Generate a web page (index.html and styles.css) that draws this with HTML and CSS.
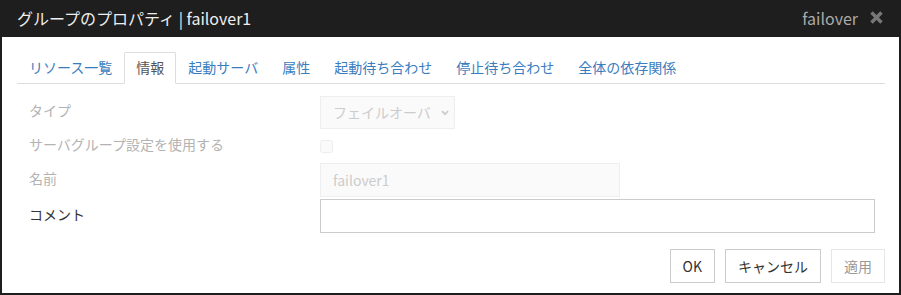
FILE: index.html
```html
<!DOCTYPE html>
<html lang="ja">
<head>
    <meta charset="UTF-8">
    <meta name="viewport" content="width=device-width, initial-scale=1.0">
    <title>グループのプロパティ</title>
    <link rel="stylesheet" href="styles.css">
</head>
<body>

    <div class="dialog">

        <!-- Title bar -->
        <div class="dialog-header">
            <h1 class="dialog-title">グループのプロパティ | failover1</h1>
            <span class="dialog-type">failover</span>
            <button class="dialog-close" aria-label="閉じる">
                <svg width="15" height="15" viewBox="0 0 15 15">
                    <path d="M2.5 2.5 L12.5 12.5 M12.5 2.5 L2.5 12.5" stroke="#777" stroke-width="3.4" stroke-linecap="butt"/>
                </svg>
            </button>
        </div>

        <div class="dialog-body">

            <!-- Tabs -->
            <ul class="tabs">
                <li><a href="#">リソース一覧</a></li>
                <li class="active"><a href="#">情報</a></li>
                <li><a href="#">起動サーバ</a></li>
                <li><a href="#">属性</a></li>
                <li><a href="#">起動待ち合わせ</a></li>
                <li><a href="#">停止待ち合わせ</a></li>
                <li><a href="#">全体の依存関係</a></li>
            </ul>

            <!-- Form -->
            <div class="form">
                <div class="form-row">
                    <label class="form-label disabled">タイプ</label>
                    <div class="select-wrap">
                        <select class="select" disabled>
                            <option>フェイルオーバ</option>
                        </select>
                        <svg class="select-arrow" width="8" height="6" viewBox="0 0 8 6">
                            <path d="M1 1.2 L4 4.2 L7 1.2" fill="none" stroke="#ccc" stroke-width="1.8"/>
                        </svg>
                    </div>
                </div>
                <div class="form-row">
                    <label class="form-label disabled">サーバグループ設定を使用する</label>
                    <input type="checkbox" class="checkbox" disabled>
                </div>
                <div class="form-row">
                    <label class="form-label disabled">名前</label>
                    <input type="text" class="input input-name" value="failover1" disabled>
                </div>
                <div class="form-row row-comment">
                    <label class="form-label">コメント</label>
                    <input type="text" class="input input-comment">
                </div>
            </div>

            <!-- Buttons -->
            <div class="actions">
                <button class="btn">OK</button>
                <button class="btn">キャンセル</button>
                <button class="btn" disabled>適用</button>
            </div>

        </div>
    </div>

</body>
</html>
```

FILE: styles.css
```css
* {
    box-sizing: border-box;
}
body {
    margin: 0;
    padding: 0;
    font-family: "Noto Sans CJK JP", "Noto Sans", sans-serif;
    font-size: 14px;
    color: #333;
    background-color: #1e1e1e;
}
.dialog {
    width: 901px;
    height: 295px;
    border: 2px solid #1e1e1e;
    border-top: 0;
    background-color: #fff;
    display: flex;
    flex-direction: column;
}
.dialog-header {
    height: 37px;
    margin: 0 -2px;
    padding: 0 17px 2px;
    background-color: #1e1e1e;
    display: flex;
    align-items: center;
}
.dialog-title {
    margin: 0;
    flex: 1;
    font-size: 16px;
    font-weight: normal;
    color: #eee;
}
.dialog-type {
    font-size: 16px;
    color: #aaa;
}
.dialog-close {
    margin-left: 11px;
    padding: 0;
    border: 0;
    background: none;
    display: flex;
}
.dialog-body {
    flex: 1;
    padding: 15px 14px 10px 15px;
    display: flex;
    flex-direction: column;
}
.tabs {
    list-style: none;
    margin: 0;
    padding: 0;
    display: flex;
    border-bottom: 1px solid #ddd;
}
.tabs li {
    margin-bottom: -1px;
}
.tabs a {
    display: block;
    padding: 5px 11px 6px;
    line-height: 19px;
    border: 1px solid transparent;
    border-radius: 2px 2px 0 0;
    color: #3a7dbf;
    text-decoration: none;
}
.tabs li.active a {
    color: #555;
    background-color: #fff;
    border-color: #ddd;
    border-bottom-color: #fff;
}
.form {
    margin-top: 11px;
    padding-left: 12px;
}
.form-row {
    height: 34px;
    display: flex;
    align-items: center;
}
.row-comment {
    margin-top: 2px;
}
.form-label {
    width: 291px;
    padding-bottom: 5px;
    color: #333;
}
.form-label.disabled {
    color: #b3b3b3;
}
.select-wrap {
    position: relative;
}
.select {
    appearance: none;
    width: 135px;
    height: 33px;
    margin: 0;
    padding: 0 12px;
    font-family: inherit;
    font-size: 14px;
    color: #ccc;
    background-color: #fafafa;
    border: 1px solid #eee;
    border-radius: 0;
    opacity: 1;
}
.select-arrow {
    position: absolute;
    right: 6px;
    top: 14px;
}
.checkbox {
    appearance: none;
    width: 13px;
    height: 13px;
    margin: 0;
    border: 1px solid #eee;
    border-radius: 3px;
    background-color: #fafafa;
}
.input {
    height: 34px;
    margin: 0;
    padding: 0 12px;
    font-family: inherit;
    font-size: 14px;
    border: 1px solid #ccc;
    background-color: #fff;
    color: #333;
}
.input-name {
    width: 300px;
    color: #ccc;
    background-color: #fafafa;
    border-color: #eee;
}
.input-comment {
    width: 555px;
}
.actions {
    margin-top: auto;
    display: flex;
    justify-content: flex-end;
    gap: 10px;
}
.btn {
    height: 34px;
    padding: 0 12px;
    font-family: inherit;
    font-size: 14px;
    color: #333;
    background-color: #fff;
    border: 1px solid #ccc;
}
.btn:disabled {
    color: #999;
    border-color: #e6e6e6;
}
```
